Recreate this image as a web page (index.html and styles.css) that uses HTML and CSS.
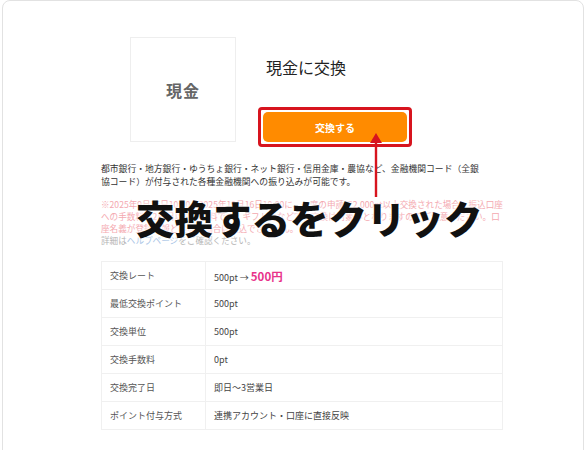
FILE: index.html
```html
<!DOCTYPE html>
<html lang="ja">
<head>
  <meta charset="UTF-8">
  <meta name="viewport" content="width=device-width, initial-scale=1.0">
  <title>現金に交換</title>
  <link rel="stylesheet" href="styles.css">
</head>
<body>
  <div class="card">
    <div class="content">
      <div class="head">
        <div class="thumb">現金</div>
        <div class="info">
          <h2 class="title">現金に交換</h2>
          <div class="btn-wrap">
            <button class="btn">交換する</button>
          </div>
        </div>
      </div>

      <p class="desc">都市銀行・地方銀行・ゆうちょ銀行・ネット銀行・信用金庫・農協など、金融機関コード（全銀協コード）が付与された各種金融機関への振り込みが可能です。</p>

      <p class="note">※2025年9月16日10:00〜2025年10月16日10:00に、一度の申請で2,000pt以上交換された場合、振込口座への手数料は2日目以降も無料です。ギフト券などでの交換は対象外となりますのでご注意ください。口座名義が登録情報と異なる場合は振込できません。</p>
      <p class="help">詳細は<a href="#">ヘルプページ</a>をご確認ください。</p>

      <table class="spec">
        <tr><th>交換レート</th><td>500pt → <span class="yen">500円</span></td></tr>
        <tr><th>最低交換ポイント</th><td>500pt</td></tr>
        <tr><th>交換単位</th><td>500pt</td></tr>
        <tr><th>交換手数料</th><td>0pt</td></tr>
        <tr><th>交換完了日</th><td>即日〜3営業日</td></tr>
        <tr><th>ポイント付与方式</th><td>連携アカウント・口座に直接反映</td></tr>
      </table>
    </div>

    <svg class="arrow" width="20" height="64" viewBox="0 0 20 64">
      <polygon points="10,0 4,10 16,10" fill="#d7141e"/>
      <rect x="8.8" y="8" width="2.4" height="56" fill="#d7141e"/>
    </svg>
    <div class="caption">交換するをクリック</div>
  </div>
</body>
</html>
```

FILE: styles.css
```css
body {
  margin: 0;
  font-family: "Noto Sans CJK JP", "Noto Sans", sans-serif;
  background: #fff;
  color: #333;
}
.card {
  position: relative;
  margin: 0 3px 0 2px;
  height: 470px;
  border: 1px solid #e2e2e2;
  border-radius: 8px;
  padding: 36px 0 0 98px;
  box-sizing: border-box;
}
.content {
  width: 402px;
}
.head {
  display: flex;
  margin-left: 29px;
}
.thumb {
  width: 106px;
  height: 105px;
  border: 1px solid #eeeeee;
  box-sizing: border-box;
  display: flex;
  align-items: center;
  justify-content: center;
  font-size: 16px;
  font-weight: bold;
  color: #666;
  letter-spacing: 1px;
}
.info {
  margin-left: 22px;
}
.title {
  margin: 18px 0 0 8px;
  font-size: 16px;
  font-weight: normal;
  line-height: 24px;
  color: #222;
}
.btn-wrap {
  margin-top: 28px;
  width: 154px;
  height: 40px;
  border: 3px solid #d7141e;
  border-radius: 4px;
  padding: 2px;
  box-sizing: border-box;
}
.btn {
  display: block;
  width: 100%;
  height: 100%;
  border: none;
  border-radius: 5px;
  background-color: #ff8b00;
  color: #fff;
  font-family: inherit;
  font-size: 10px;
  font-weight: bold;
}
.desc {
  width: 382px;
  margin: 15px 0 0;
  font-size: 8.8px;
  line-height: 13px;
  color: #333;
}
.note {
  margin: 10px 0 0;
  font-size: 8.6px;
  line-height: 12px;
  color: #f4a9b0;
}
.help {
  margin: 0;
  font-size: 8.6px;
  line-height: 12px;
  color: #b5b5b5;
}
.help a {
  color: #a8c4e6;
  text-decoration: none;
}
.spec {
  margin-top: 15px;
  width: 100%;
  border-collapse: collapse;
  font-size: 9px;
}
.spec th,
.spec td {
  height: 28px;
  padding: 0 8px;
  text-align: left;
  border: 1px solid #f0f0f0;
  box-sizing: border-box;
}
.spec th {
  width: 104px;
  font-weight: normal;
  color: #555;
}
.spec td {
  color: #444;
}
.yen {
  font-size: 11.5px;
  font-weight: bold;
  color: #e8338a;
}
.arrow {
  position: absolute;
  left: 363px;
  top: 132px;
}
.caption {
  position: absolute;
  left: 133px;
  top: 190px;
  font-size: 38.5px;
  font-weight: 900;
  line-height: 52px;
  color: #111;
  white-space: nowrap;
  text-shadow: 0 0 4px #fff, 0 0 4px #fff;
}
```
